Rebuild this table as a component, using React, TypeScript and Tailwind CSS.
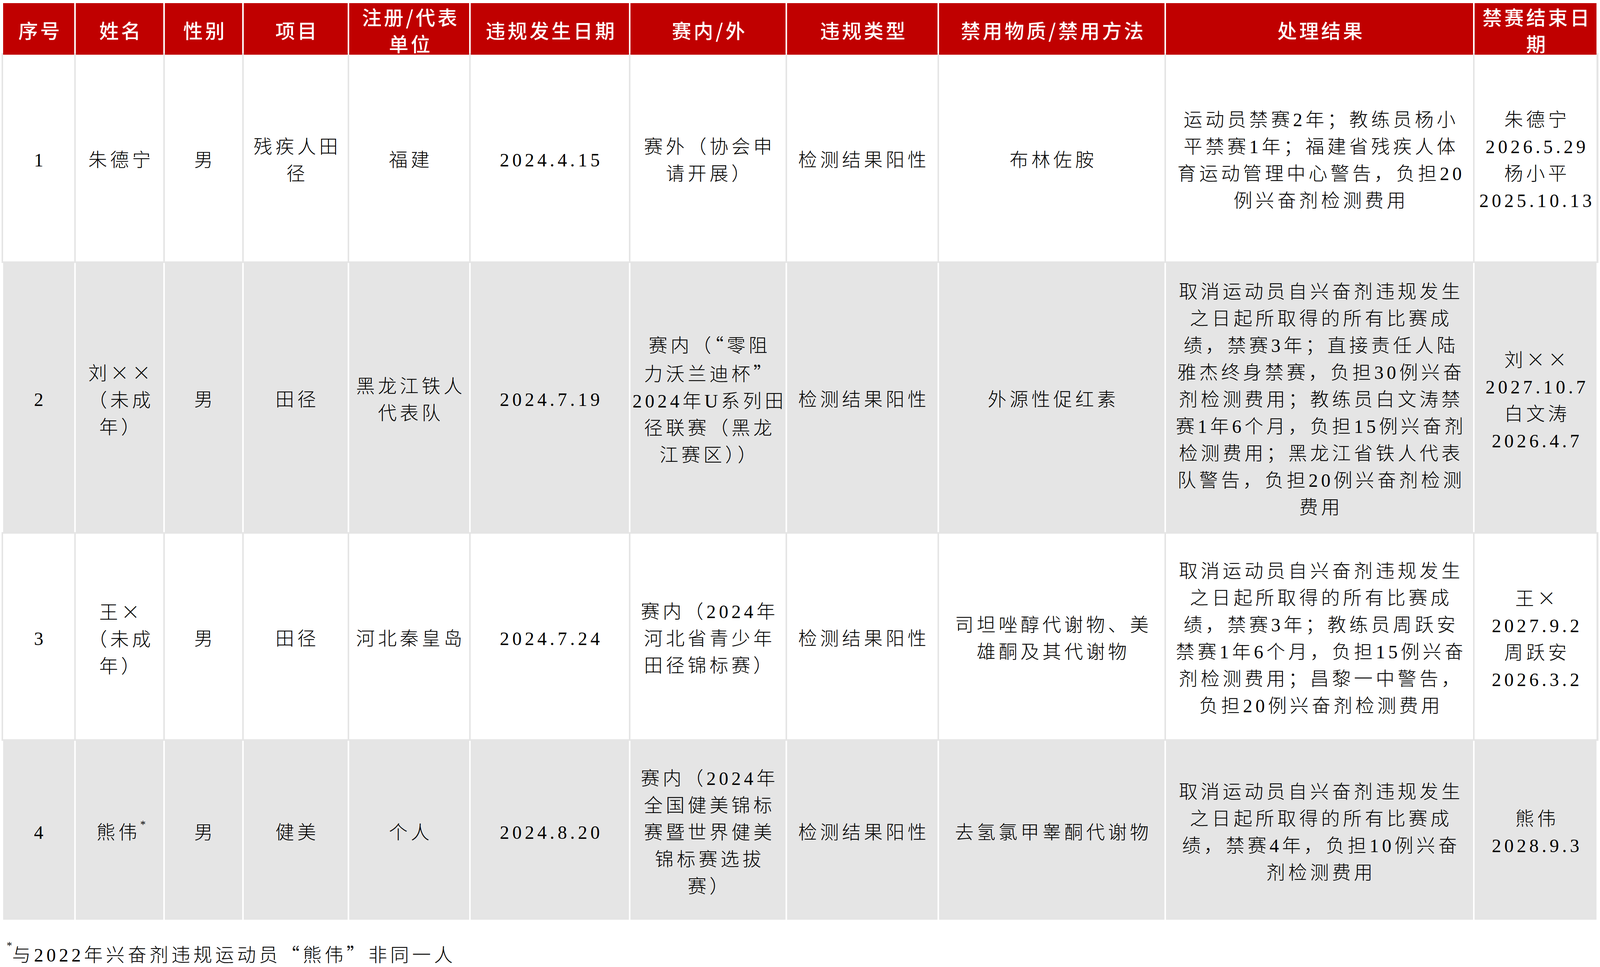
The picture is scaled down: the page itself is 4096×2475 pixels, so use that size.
import React from "react";

type Line = string;
type Row = { tone: "white" | "gray"; height: string; cells: Line[][] };

const COLS =
  "grid grid-cols-[182px_224px_198px_266px_307px_405px_397px_385px_577px_786px_312px] gap-x-[4px]";

const headers: Line[][] = [
  ["序号"],
  ["姓名"],
  ["性别"],
  ["项目"],
  ["注册/代表", "单位"],
  ["违规发生日期"],
  ["赛内/外"],
  ["违规类型"],
  ["禁用物质/禁用方法"],
  ["处理结果"],
  ["禁赛结束日", "期"],
];

const rows: Row[] = [
  {
    tone: "white",
    height: "h-[529px]",
    cells: [
      ["1"],
      ["朱德宁"],
      ["男"],
      ["残疾人田", "径"],
      ["福建"],
      ["2024.4.15"],
      ["赛外（协会申", "请开展）"],
      ["检测结果阳性"],
      ["布林佐胺"],
      [
        "运动员禁赛2年；教练员杨小",
        "平禁赛1年；福建省残疾人体",
        "育运动管理中心警告，负担20",
        "例兴奋剂检测费用",
      ],
      ["朱德宁", "2026.5.29", "杨小平", "2025.10.13"],
    ],
  },
  {
    tone: "gray",
    height: "h-[689px]",
    cells: [
      ["2"],
      ["刘××", "（未成", "年）"],
      ["男"],
      ["田径"],
      ["黑龙江铁人", "代表队"],
      ["2024.7.19"],
      ["赛内（“零阻", "力沃兰迪杯”", "2024年U系列田", "径联赛（黑龙", "江赛区））"],
      ["检测结果阳性"],
      ["外源性促红素"],
      [
        "取消运动员自兴奋剂违规发生",
        "之日起所取得的所有比赛成",
        "绩，禁赛3年；直接责任人陆",
        "雅杰终身禁赛，负担30例兴奋",
        "剂检测费用；教练员白文涛禁",
        "赛1年6个月，负担15例兴奋剂",
        "检测费用；黑龙江省铁人代表",
        "队警告，负担20例兴奋剂检测",
        "费用",
      ],
      ["刘××", "2027.10.7", "白文涛", "2026.4.7"],
    ],
  },
  {
    tone: "white",
    height: "h-[526px]",
    cells: [
      ["3"],
      ["王×", "（未成", "年）"],
      ["男"],
      ["田径"],
      ["河北秦皇岛"],
      ["2024.7.24"],
      ["赛内（2024年", "河北省青少年", "田径锦标赛）"],
      ["检测结果阳性"],
      ["司坦唑醇代谢物、美", "雄酮及其代谢物"],
      [
        "取消运动员自兴奋剂违规发生",
        "之日起所取得的所有比赛成",
        "绩，禁赛3年；教练员周跃安",
        "禁赛1年6个月，负担15例兴奋",
        "剂检测费用；昌黎一中警告，",
        "负担20例兴奋剂检测费用",
      ],
      ["王×", "2027.9.2", "周跃安", "2026.3.2"],
    ],
  },
  {
    tone: "gray",
    height: "h-[458px]",
    cells: [
      ["4"],
      ["熊伟*"],
      ["男"],
      ["健美"],
      ["个人"],
      ["2024.8.20"],
      ["赛内（2024年", "全国健美锦标", "赛暨世界健美", "锦标赛选拔", "赛）"],
      ["检测结果阳性"],
      ["去氢氯甲睾酮代谢物"],
      [
        "取消运动员自兴奋剂违规发生",
        "之日起所取得的所有比赛成",
        "绩，禁赛4年，负担10例兴奋",
        "剂检测费用",
      ],
      ["熊伟", "2028.9.3"],
    ],
  },
];

// ×, quotes and the footnote star need their own treatment
const renderText = (s: string) =>
  s.split(/([×“”*])/).map((part, i) => {
    if (part === "*")
      return (
        <span key={i} className="align-top text-[28px] leading-none tracking-normal">
          *
        </span>
      );
    if (part === "×" || part === "“" || part === "”")
      return (
        <span key={i} className="font-['Noto_Sans_CJK_SC',sans-serif]">
          {part}
        </span>
      );
    return part;
  });

const Cell = ({ lines, className }: { lines: Line[]; className: string }) => (
  <div className={`flex flex-col items-center justify-center text-center ${className}`}>
    {lines.map((line, i) => (
      <div key={i} className="whitespace-nowrap pl-[8px]">
        {renderText(line)}
      </div>
    ))}
  </div>
);

const BODY_FONT =
  "font-['Liberation_Serif','Noto_Sans_CJK_SC',serif] text-[48px] leading-[69px] tracking-[8px] font-light text-black";

export default function App() {
  return (
    <div className="min-h-screen bg-white px-[8px] pt-[8px]">
      {/* Header */}
      <div
        className={`${COLS} h-[128px] font-['Noto_Sans_CJK_SC',sans-serif] text-[50px] leading-[68px] tracking-[6px] font-medium text-white`}
      >
        {headers.map((lines, i) => (
          <Cell key={i} lines={lines} className="bg-[#c00000]" />
        ))}
      </div>

      {rows.map((row, r) =>
        row.tone === "white" ? (
          <div key={r} className="mx-[-4px] bg-[#e5e5e5] px-[4px] py-[4px]">
            <div className={`${COLS} ${row.height} ${BODY_FONT}`}>
              {row.cells.map((lines, i) => (
                <Cell key={i} lines={lines} className="bg-white pt-[10px]" />
              ))}
            </div>
          </div>
        ) : (
          <div key={r} className={`${COLS} ${row.height} ${BODY_FONT}`}>
            {row.cells.map((lines, i) => (
              <Cell key={i} lines={lines} className="bg-[#e5e5e5] pt-[10px]" />
            ))}
          </div>
        )
      )}

      {/* Footnote */}
      <div className={`mt-[52px] pl-[9px] whitespace-nowrap ${BODY_FONT}`}>
        {renderText("*与2022年兴奋剂违规运动员“熊伟”非同一人")}
      </div>
    </div>
  );
}
